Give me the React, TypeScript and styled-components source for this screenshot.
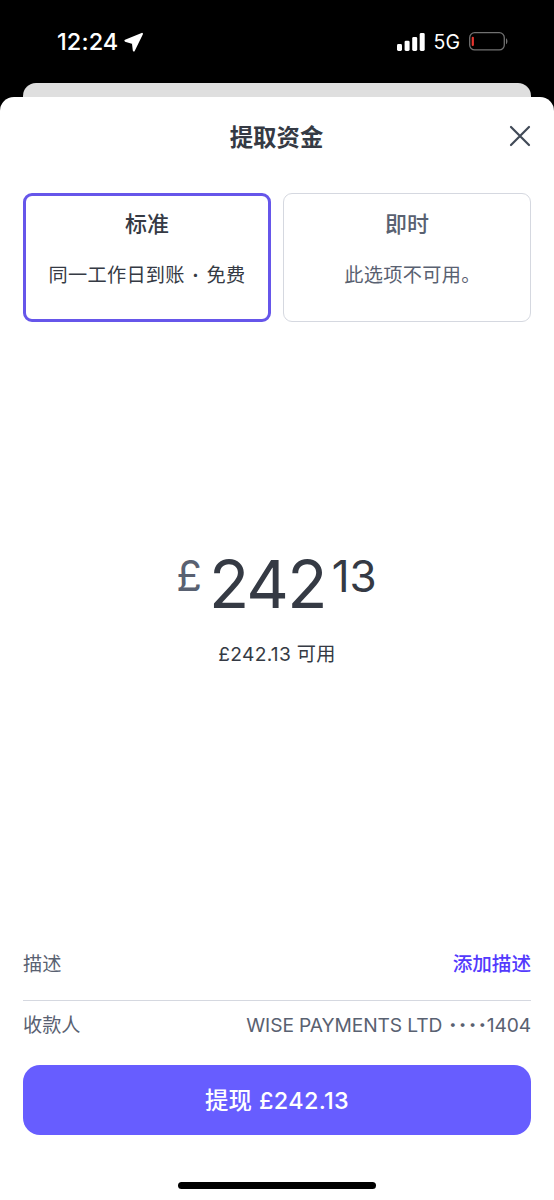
import React from "react";
import styled, { createGlobalStyle } from "styled-components";

const GlobalStyle = createGlobalStyle`
  *, *::before, *::after { box-sizing: border-box; }
  body {
    margin: 0;
    background: #000;
    font-family: Inter, "Noto Sans CJK SC", sans-serif;
    color: #353a44;
  }
`;

const Screen = styled.div`
  display: flex;
  flex-direction: column;
  width: 554px;
  height: 1200px;
  background: #000;
  overflow: hidden;
`;

const StatusBar = styled.header`
  display: flex;
  align-items: center;
  justify-content: space-between;
  height: 83px;
  padding: 0 46px 0 57px;
  color: #fff;
`;

const StatusGroup = styled.div<{ $gap: number }>`
  display: flex;
  align-items: center;
  gap: ${(p) => p.$gap}px;
`;

const Clock = styled.span`
  font-size: 23.5px;
  font-weight: 500;
  line-height: 28px;
  letter-spacing: 0.1px;
`;

const Network = styled.span`
  font-size: 19.5px;
  line-height: 24px;
`;

const BackSheet = styled.div`
  flex: none;
  height: 14px;
  margin: 0 23px;
  border-radius: 13px 13px 0 0;
  background: #dfdfdf;
`;

const Sheet = styled.main`
  flex: 1;
  display: flex;
  flex-direction: column;
  padding: 0 23px;
  border-radius: 14px 14px 0 0;
  background: #fff;
`;

const TitleBar = styled.div`
  display: grid;
  grid-template-columns: 22px 1fr 22px;
  align-items: center;
  height: 80px;
`;

const Title = styled.h1`
  grid-column: 2;
  margin: 2px 1px 0 0;
  text-align: center;
  font-size: 23.4px;
  font-weight: 700;
  line-height: 32px;
`;

const CloseButton = styled.button`
  display: flex;
  padding: 0 0 2px;
  border: 0;
  background: none;
  color: #414a57;
`;

const Options = styled.div`
  display: grid;
  grid-template-columns: 1fr 1fr;
  gap: 12px;
  margin-top: 16px;
`;

const OptionCard = styled.button<{ $selected?: boolean }>`
  display: flex;
  flex-direction: column;
  align-items: center;
  height: 129px;
  padding: ${(p) => (p.$selected ? 13 : 15)}px 0 0;
  border: ${(p) => (p.$selected ? "3px solid #6656ea" : "1px solid #d5d8e0")};
  border-radius: 9px;
  background: #fff;
  color: ${(p) => (p.$selected ? "#353a44" : "#596171")};
  font-family: inherit;
`;

const OptionName = styled.span`
  font-size: 22px;
  font-weight: 500;
  line-height: 30px;
`;

const OptionNote = styled.span<{ $indent?: number }>`
  margin-top: 22px;
  padding-left: ${(p) => p.$indent ?? 0}px;
  font-size: 19.2px;
  line-height: 28px;
  letter-spacing: 0.3px;
  word-spacing: 1.8px;
  white-space: nowrap;
`;

const Dot = styled.span`
  font-weight: 700;
`;

const AmountArea = styled.section`
  flex: 1;
  display: flex;
  flex-direction: column;
  align-items: center;
  padding-top: 222px;
`;

const Amount = styled.div`
  display: flex;
  align-items: flex-start;
  margin-right: 1px;
  color: #353a44;
`;

const Currency = styled.span`
  margin: 7px 7px 0 0;
  font-size: 42px;
  line-height: 50px;
  color: #596171;
`;

const Pounds = styled.span`
  font-size: 66px;
  line-height: 80px;
  letter-spacing: -1.8px;
`;

const Pence = styled.span`
  margin: 0 0 0 6px;
  padding-top: 3px;
  font-size: 44px;
  line-height: 58px;
`;

const Available = styled.p`
  margin: 16px 0 0;
  font-size: 19.2px;
  line-height: 28px;
  letter-spacing: 0.3px;
`;

const DetailRow = styled.div<{ $height: number; $divided?: boolean }>`
  display: flex;
  align-items: center;
  justify-content: space-between;
  height: ${(p) => p.$height}px;
  padding-bottom: ${(p) => (p.$divided ? 0 : 2)}px;
  border-bottom: ${(p) => (p.$divided ? "1px solid #d5d8e0" : "0")};
  font-size: 19.2px;
  line-height: 28px;
  color: #596171;
`;

const AddLink = styled.a`
  font-size: 19.6px;
  font-weight: 500;
  color: #533afd;
`;

const Payee = styled.span`
  display: flex;
  align-items: center;
  letter-spacing: -0.1px;
`;

const Mask = styled.span`
  margin: 0 -2px 0 7px;
  font-weight: 900;
  letter-spacing: 2.7px;
`;

const SubmitButton = styled.button`
  flex: none;
  height: 70px;
  margin-top: 15px;
  padding: 0 0 3px;
  border: 0;
  border-radius: 17px;
  background: #675dff;
  color: #fff;
  font-family: inherit;
  font-size: 23.4px;
  font-weight: 500;
  letter-spacing: 0.35px;
`;

const HomeArea = styled.footer`
  display: flex;
  justify-content: center;
  height: 65px;
  padding-top: 47px;
`;

const HomeIndicator = styled.div`
  width: 198px;
  height: 7px;
  border-radius: 4px;
  background: #000;
`;

const LocationIcon = () => (
  <svg width="20" height="20" viewBox="0 0 20 20" fill="#fff" stroke="#fff" strokeWidth="2" strokeLinejoin="round">
    <path d="M18 1.8 1.400 8.700l7.500 2.300.9 7.500Z" />
  </svg>
);

const SignalIcon = () => (
  <svg width="28" height="18" viewBox="0 0 28 18" fill="#fff">
    <rect x="0" y="11" width="5" height="7" rx="1.4" />
    <rect x="7.6" y="7.7" width="5" height="10.3" rx="1.4" />
    <rect x="15.2" y="4" width="5" height="14" rx="1.4" />
    <rect x="22.7" y="0" width="5" height="18" rx="1.4" />
  </svg>
);

const BatteryIcon = () => (
  <svg width="39" height="19" viewBox="0 0 39 19" fill="none">
    <rect x="0.7" y="0.7" width="34.6" height="17.2" rx="5" stroke="#717171" strokeWidth="1.3" />
    <path d="M37 6.300c1.900.9 1.900 5.100 0 6Z" fill="#717171" />
    <rect x="2.7" y="4.8" width="2.2" height="9.2" rx="1" fill="#e5352e" />
  </svg>
);

const CloseIcon = () => (
  <svg width="22" height="22" viewBox="0 0 22 22" fill="none" stroke="currentColor" strokeWidth="2.2" strokeLinecap="round">
    <path d="m2 2 18 18M20 2 2 20" />
  </svg>
);

export default function App() {
  return (
    <>
      <GlobalStyle />
      <Screen>
        <StatusBar>
          <StatusGroup $gap={6}>
            <Clock>12:24</Clock>
            <LocationIcon />
          </StatusGroup>
          <StatusGroup $gap={9}>
            <SignalIcon />
            <Network>5G</Network>
            <BatteryIcon />
          </StatusGroup>
        </StatusBar>
        <BackSheet />
        <Sheet>
          <TitleBar>
            <Title>提取资金</Title>
            <CloseButton aria-label="关闭">
              <CloseIcon />
            </CloseButton>
          </TitleBar>
          <Options>
            <OptionCard $selected>
              <OptionName>标准</OptionName>
              <OptionNote>
                同一工作日到账 <Dot>·</Dot> 免费
              </OptionNote>
            </OptionCard>
            <OptionCard>
              <OptionName>即时</OptionName>
              <OptionNote $indent={11}>此选项不可用。</OptionNote>
            </OptionCard>
          </Options>
          <AmountArea>
            <Amount>
              <Currency>£</Currency>
              <Pounds>242</Pounds>
              <Pence>13</Pence>
            </Amount>
            <Available>£242.13 可用</Available>
          </AmountArea>
          <DetailRow $height={73} $divided>
            <span>描述</span>
            <AddLink>添加描述</AddLink>
          </DetailRow>
          <DetailRow $height={49}>
            <span>收款人</span>
            <Payee>
              WISE PAYMENTS LTD
              <Mask>····</Mask>
              1404
            </Payee>
          </DetailRow>
          <SubmitButton>提现 £242.13</SubmitButton>
          <HomeArea>
            <HomeIndicator />
          </HomeArea>
        </Sheet>
      </Screen>
    </>
  );
}
